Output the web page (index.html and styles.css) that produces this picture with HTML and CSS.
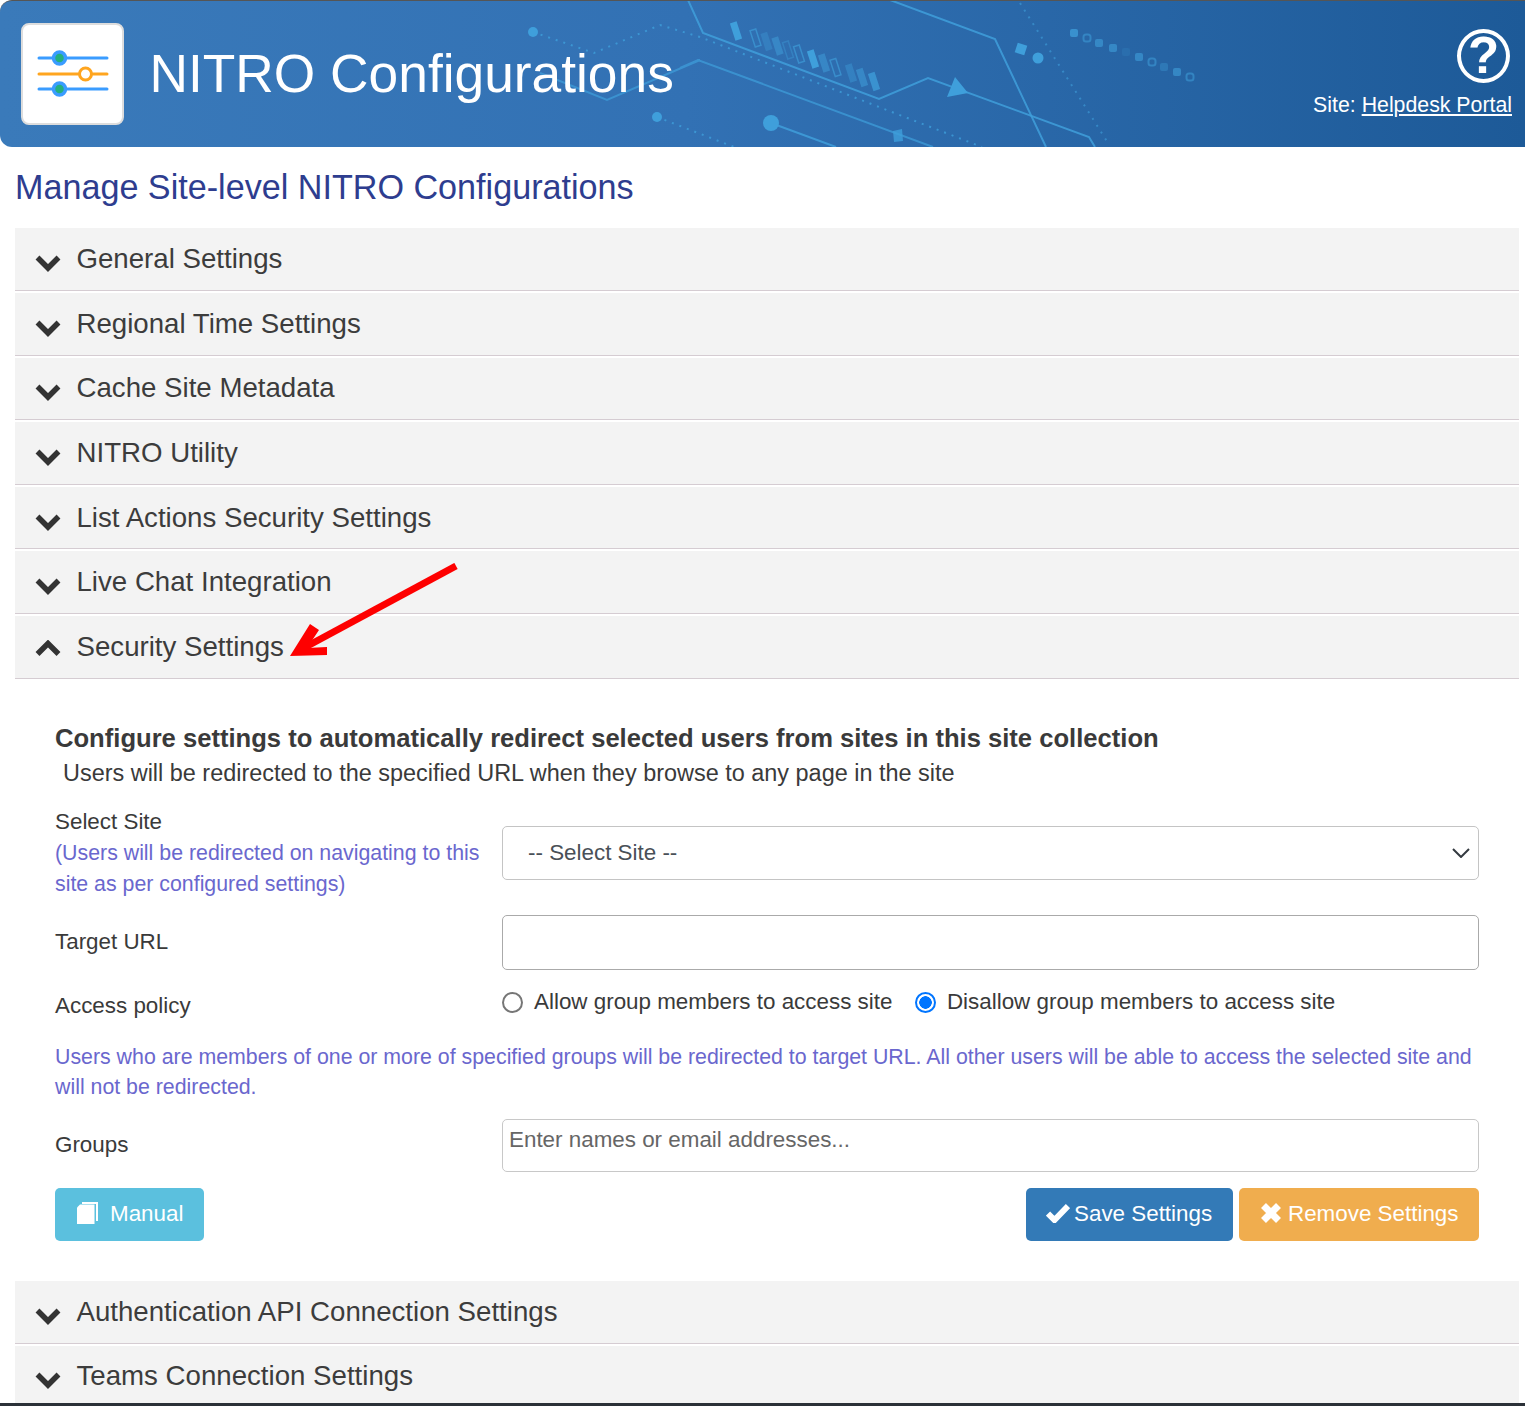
FILE: index.html
```html
<!DOCTYPE html>
<html lang="en">
<head>
  <meta charset="UTF-8">
  <title>NITRO Configurations</title>
  <link rel="stylesheet" href="styles.css">
</head>
<body>
  <header class="banner">
    <svg class="circuit" width="1525" height="146" viewBox="0 1 1525 146" fill="none" stroke="#3f9fdb">
      <path d="M688 0L703 33L879 99L928 78L1089 137L1095 147" stroke-width="2" opacity=".85"/>
      <path d="M890 0L995 39L1046 147" stroke-width="2" opacity=".85"/>
      <path d="M680 68L698 60L933 147M540 73L607 100L700 60" stroke-width="2" opacity=".7"/>
      <path d="M771 123L836 147" stroke-width="2" opacity=".85"/>
      <path d="M533 32L594 53L660 25L700 37L879 107L982 147" stroke-width="2" stroke-dasharray="2 6" opacity=".8"/>
      <path d="M657 117L734 147" stroke-width="2" stroke-dasharray="2 6" opacity=".8"/>
      <path d="M1020 3L1108 143" stroke-width="2" stroke-dasharray="2 6" opacity=".6"/>
      <g fill="#3f9fdb" stroke="none">
        <rect x="-3.5" y="-9" width="7" height="18" transform="translate(736 31) rotate(-18)"/>
        <rect x="-3.5" y="-9" width="7" height="18" transform="translate(766.5 41.5) rotate(-18)" opacity=".35"/>
        <rect x="-3.5" y="-9" width="7" height="18" transform="translate(777.5 46) rotate(-18)" opacity=".5"/>
        <rect x="-3.5" y="-9" width="7" height="18" transform="translate(813 59) rotate(-18)"/>
        <rect x="-3.5" y="-9" width="7" height="18" transform="translate(824 63) rotate(-18)" opacity=".5"/>
        <rect x="-3.5" y="-9" width="7" height="18" transform="translate(851 73) rotate(-18)" opacity=".4"/>
        <rect x="-3.5" y="-9" width="7" height="18" transform="translate(862 77.5) rotate(-18)" opacity=".55"/>
        <rect x="-3.5" y="-9" width="7" height="18" transform="translate(874 81.5) rotate(-18)" opacity=".75"/>
      </g>
      <g stroke-width="1.5" opacity=".65">
        <rect x="-3" y="-8.5" width="6" height="17" transform="translate(755.5 38) rotate(-18)"/>
        <rect x="-3" y="-8.5" width="6" height="17" transform="translate(788 50) rotate(-18)" opacity=".6"/>
        <rect x="-3" y="-8.5" width="6" height="17" transform="translate(799 54) rotate(-18)"/>
        <rect x="-3" y="-8.5" width="6" height="17" transform="translate(835.5 67.5) rotate(-18)"/>
      </g>
      <g fill="#3f9fdb" stroke="none">
        <circle cx="533" cy="32" r="5"/>
        <circle cx="657" cy="117" r="5"/>
        <circle cx="771" cy="123" r="8"/>
        <circle cx="1038" cy="58" r="5.5"/>
        <path d="M955 77L947 97L968 93Z"/>
        <path d="M893 131L902 129L903 141L894 142Z" opacity=".8"/>
        <rect x="-5" y="-5" width="10" height="10" transform="translate(1021 49) rotate(18)"/>
      </g>
      <g fill="#3f9fdb" stroke="none">
        <rect x="1070" y="29" width="8" height="8" rx="2" opacity=".75"/>
        <rect x="1095" y="39" width="8" height="8" rx="2" opacity=".6"/>
        <rect x="1109" y="44" width="8" height="8" rx="2" opacity=".6"/>
        <rect x="1122" y="48" width="8" height="8" rx="2" opacity=".15"/>
        <rect x="1135" y="53" width="8" height="8" rx="2" opacity=".6"/>
        <rect x="1160" y="63" width="8" height="8" rx="2" opacity=".35"/>
        <rect x="1173" y="68" width="8" height="8" rx="2" opacity=".6"/>
      </g>
      <g stroke-width="2" opacity=".55">
        <rect x="1083.5" y="34.5" width="7" height="7" rx="2.5"/>
        <rect x="1148.5" y="58.5" width="7" height="7" rx="2.5"/>
        <rect x="1186.5" y="73.5" width="7" height="7" rx="2.5"/>
      </g>
    </svg>
    <div class="logo">
      <svg width="72" height="48" viewBox="0 0 72 48" fill="none">
        <path d="M2 8H70M2 39H70" stroke="#3a9cff" stroke-width="3" stroke-linecap="round"/>
        <path d="M2 24H70" stroke="#ffa51f" stroke-width="3" stroke-linecap="round"/>
        <circle cx="22.5" cy="8" r="6" fill="#23b07f" stroke="#3a9cff" stroke-width="3.5"/>
        <circle cx="22.5" cy="39" r="6" fill="#23b07f" stroke="#3a9cff" stroke-width="3.5"/>
        <circle cx="48.5" cy="24" r="6" fill="#fff" stroke="#ffa51f" stroke-width="3"/>
      </svg>
    </div>
    <h1 class="app-title">NITRO Configurations</h1>
    <div class="banner-right">
      <div class="help-icon">?</div>
      <div class="site-link">Site: <a href="#">Helpdesk Portal</a></div>
    </div>
  </header>

  <main class="content">
    <h2 class="page-title">Manage Site-level NITRO Configurations</h2>

    <div class="acc-row"><svg class="chev" viewBox="0 0 26 18"><path d="M2.5 3.5L13 14L23.5 3.5"/></svg>General Settings</div>
    <div class="acc-row"><svg class="chev" viewBox="0 0 26 18"><path d="M2.5 3.5L13 14L23.5 3.5"/></svg>Regional Time Settings</div>
    <div class="acc-row"><svg class="chev" viewBox="0 0 26 18"><path d="M2.5 3.5L13 14L23.5 3.5"/></svg>Cache Site Metadata</div>
    <div class="acc-row"><svg class="chev" viewBox="0 0 26 18"><path d="M2.5 3.5L13 14L23.5 3.5"/></svg>NITRO Utility</div>
    <div class="acc-row"><svg class="chev" viewBox="0 0 26 18"><path d="M2.5 3.5L13 14L23.5 3.5"/></svg>List Actions Security Settings</div>
    <div class="acc-row"><svg class="chev" viewBox="0 0 26 18"><path d="M2.5 3.5L13 14L23.5 3.5"/></svg>Live Chat Integration</div>
    <div class="acc-row"><svg class="chev up" viewBox="0 0 26 18"><path d="M2.5 14L13 3.5L23.5 14"/></svg>Security Settings</div>

    <section class="panel">
      <h3 class="panel-title">Configure settings to automatically redirect selected users from sites in this site collection</h3>
      <p class="panel-sub">Users will be redirected to the specified URL when they browse to any page in the site</p>

      <div class="form-row row-site">
        <label class="form-label">Select Site
          <span class="hint">(Users will be redirected on navigating to this site as per configured settings)</span>
        </label>
        <div class="select-box">-- Select Site --
          <svg class="select-arrow" width="18" height="10" viewBox="0 0 18 10"><path d="M1 1L9 9L17 1" fill="none" stroke="#343a40" stroke-width="2"/></svg>
        </div>
      </div>

      <div class="form-row row-url">
        <label class="form-label">Target URL</label>
        <div class="text-box"></div>
      </div>

      <div class="form-row row-policy">
        <label class="form-label">Access policy</label>
        <div class="radios">
          <span class="radio-item"><span class="radio"></span>Allow group members to access site</span>
          <span class="radio-item"><span class="radio on"></span>Disallow group members to access site</span>
        </div>
      </div>

      <p class="hint policy-note">Users who are members of one or more of specified groups will be redirected to target URL. All other users will be able to access the selected site and will not be redirected.</p>

      <div class="form-row row-groups">
        <label class="form-label">Groups</label>
        <div class="people-box">Enter names or email addresses...</div>
      </div>

      <div class="actions">
        <a class="btn btn-info" href="#">
          <svg class="btn-icon" width="22" height="22" viewBox="0 0 22 22"><path d="M5 0H21V19H19V2H5Z" fill="#fff"/><path d="M3 2.5H17.5V22H0V5.5Z" fill="#fff"/></svg>
          <span class="btn-gap">Manual</span>
        </a>
        <div class="actions-right">
          <a class="btn btn-primary" href="#">
            <svg class="btn-icon" width="24" height="20" viewBox="0 0 24 20"><path d="M2 10.5L8.5 17L22 3" fill="none" stroke="#fff" stroke-width="6"/></svg>
            Save Settings
          </a>
          <a class="btn btn-warning" href="#">
            <svg class="btn-icon" width="20" height="20" viewBox="0 0 20 20"><path d="M2.5 2.5L17.5 17.5M17.5 2.5L2.5 17.5" fill="none" stroke="#fff" stroke-width="7"/></svg>
            Remove Settings
          </a>
        </div>
      </div>
    </section>

    <div class="acc-row"><svg class="chev" viewBox="0 0 26 18"><path d="M2.5 3.5L13 14L23.5 3.5"/></svg>Authentication API Connection Settings</div>
    <div class="acc-row"><svg class="chev" viewBox="0 0 26 18"><path d="M2.5 3.5L13 14L23.5 3.5"/></svg>Teams Connection Settings</div>
  </main>

  <svg class="red-arrow" width="180" height="105" viewBox="0 0 180 105">
    <path d="M168 3L12 87" fill="none" stroke="#fe0000" stroke-width="7"/>
    <path d="M2 93L22 61L31 67L19 85L39 84V92Z" fill="#fe0000"/>
  </svg>
  <div class="bottom-edge"></div>
</body>
</html>
```

FILE: styles.css
```css
html, body {
  height: 1406px;
  overflow: hidden;
}
body {
  margin: 0;
  padding: 0;
  font-family: "Liberation Sans", Arial, sans-serif;
  color: #3a3a3a;
  background-color: #fff;
  position: relative;
}

/* banner */
.banner {
  position: relative;
  display: flex;
  align-items: center;
  height: 146px;
  border-top: 1px solid #555;
  border-radius: 12px 0 0 12px;
  background: linear-gradient(90deg, #3a7aba 0%, #3271b4 45%, #1d5a98 100%);
  overflow: hidden;
}
.circuit {
  position: absolute;
  left: 0;
  top: 0;
}
.logo {
  position: relative;
  display: flex;
  align-items: center;
  justify-content: center;
  box-sizing: border-box;
  width: 103px;
  height: 102px;
  margin: 0 25.5px 0 21px;
  background: #fff;
  border: 2px solid #ddd;
  border-radius: 8px;
}
.app-title {
  position: relative;
  margin: -2px 0 0;
  font-size: 53.3px;
  font-weight: normal;
  color: #fff;
}
.banner-right {
  position: absolute;
  right: 13px;
  top: 27px;
  display: flex;
  flex-direction: column;
  align-items: flex-end;
  color: #fff;
  font-size: 21.3px;
}
.help-icon {
  box-sizing: border-box;
  width: 53px;
  height: 54px;
  margin: 1px 2px 0 0;
  border: 4px solid #fff;
  border-radius: 50%;
  font-size: 51px;
  font-weight: bold;
  line-height: 46px;
  text-align: center;
}
.site-link {
  margin-top: 10px;
}
.site-link a {
  color: #fff;
}

/* accordion */
.content {
  padding: 0 6px 0 15px;
}
.page-title {
  margin: 0;
  height: 81.4px;
  padding-top: 20px;
  box-sizing: border-box;
  font-size: 34.15px;
  font-weight: normal;
  line-height: 40px;
  color: #2e3d8f;
}
.acc-row {
  display: flex;
  align-items: center;
  box-sizing: border-box;
  height: 62.6px;
  margin-bottom: 2px;
  padding-left: 20px;
  background: #f3f3f3;
  border-bottom: 1px solid #d5ccd2;
  font-size: 27.65px;
  color: #3c3c3c;
}
.chev {
  flex: none;
  width: 26px;
  height: 18px;
  margin: 8px 15.5px 0 0;
  fill: none;
  stroke: #333;
  stroke-width: 5.5;
}
.chev.up {
  margin-top: 4px;
}

/* open panel */
.panel {
  padding: 44px 40px 40.4px;
  margin-top: -2px;
  font-size: 22.4px;
}
.panel-title {
  margin: 0;
  font-size: 25.6px;
  line-height: 30px;
}
.panel-sub {
  margin: 5px 0 0 8px;
  font-size: 23.45px;
  line-height: 30px;
}
.form-row {
  display: grid;
  grid-template-columns: 447px 1fr;
}
.form-label {
  display: block;
  line-height: 31px;
}
.hint {
  display: block;
  font-size: 21.33px;
  color: #6a67ce;
}
.form-label .hint {
  margin-top: 1px;
}
.row-site {
  margin-top: 18px;
}
.select-box {
  position: relative;
  box-sizing: border-box;
  height: 54px;
  margin-top: 20px;
  padding-left: 25px;
  border: 1px solid #c4c4c4;
  border-radius: 5px;
  line-height: 52px;
  color: #495057;
}
.select-arrow {
  position: absolute;
  right: 8px;
  top: 21px;
}
.row-url {
  margin-top: 15px;
}
.row-url .form-label {
  line-height: 54px;
}
.text-box {
  box-sizing: border-box;
  height: 55px;
  border: 1px solid #aaa;
  border-radius: 5px;
}
.row-policy {
  margin-top: 15px;
}
.radios {
  display: flex;
  gap: 22.5px;
  margin-top: -1px;
  line-height: 34px;
}
.row-policy .form-label {
  padding-top: 5px;
}
.radio-item {
  display: flex;
  align-items: center;
}
.radio {
  box-sizing: border-box;
  width: 21px;
  height: 21px;
  margin-right: 11px;
  border: 2px solid #767676;
  border-radius: 50%;
}
.radio.on {
  border-color: #0075ff;
  background: radial-gradient(circle, #0075ff 0 6px, #fff 6.5px);
}
.policy-note {
  margin: 21px 0 0;
  line-height: 30px;
}
.row-groups {
  margin-top: 17px;
}
.row-groups .form-label {
  line-height: 52px;
}
.people-box {
  box-sizing: border-box;
  height: 53px;
  padding: 3px 6px;
  border: 1px solid #c8c8c8;
  border-radius: 5px;
  line-height: 34px;
  color: #666;
}
.actions {
  display: flex;
  justify-content: space-between;
  margin-top: 16px;
}
.actions-right {
  display: flex;
  gap: 6px;
}
.btn {
  display: flex;
  align-items: center;
  gap: 4px;
  box-sizing: border-box;
  height: 53px;
  padding: 0 20px;
  border-radius: 5px;
  color: #fff;
  text-decoration: none;
}
.btn-icon {
  margin-top: -3px;
}
.btn-gap {
  margin-left: 7px;
}
.btn-info {
  width: 149px;
  padding-left: 22px;
  background: #5bc0de;
}
.btn-primary {
  width: 207px;
  background: #337ab7;
}
.btn-warning {
  width: 240px;
  gap: 7px;
  padding-left: 22px;
  background: #f0ad4e;
}

/* overlays */
.red-arrow {
  position: absolute;
  left: 288px;
  top: 563px;
}
.bottom-edge {
  position: absolute;
  left: 0;
  right: 0;
  top: 1403px;
  height: 3px;
  background: #2b3138;
}
```
